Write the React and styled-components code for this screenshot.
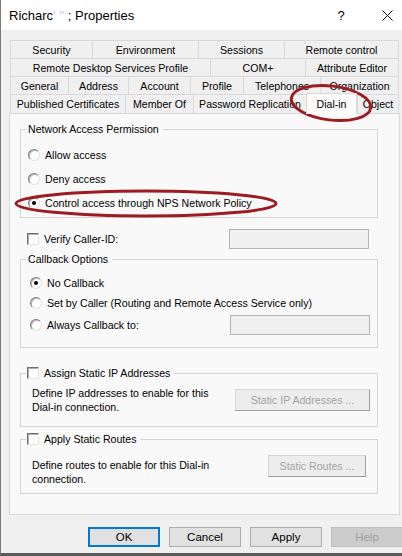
import React from 'react'
import styled, { createGlobalStyle } from 'styled-components'

const GlobalStyle = createGlobalStyle`
  html, body {
    margin: 0;
    padding: 0;
    background: #f0f0f0;
  }
  body {
    font-family: "Segoe UI", "Liberation Sans", Arial, sans-serif;
    font-size: 10.6px;
    color: #000;
  }
  * { box-sizing: border-box; }
`

const Window = styled.div`
  position: relative;
  width: 402px;
  height: 556px;
  background: #f0f0f0;
  border-left: 1px solid #7a7a7a;
  border-bottom: 3px solid #5c5c5c;
  display: flex;
  flex-direction: column;
  overflow: hidden;
`

const TitleBar = styled.div`
  height: 30px;
  flex: 0 0 30px;
  background: #fff;
  display: flex;
  align-items: center;
  padding-left: 8px;
  font-size: 13px;
`

const Title = styled.span`
  flex: 1;
`

const Faint = styled.span`
  color: #c8c8c8;
`

const HelpMark = styled.span`
  width: 30px;
  margin-right: 16px;
  text-align: center;
  font-size: 13px;
`

const CloseBox = styled.span`
  width: 30px;
  display: flex;
  justify-content: center;
  align-items: center;
`

const Body = styled.div`
  padding: 10px 0 0 8px;
  display: flex;
  flex-direction: column;
`

const Tabs = styled.div`
  margin-left: 1px;
  width: 389px;
  display: flex;
  flex-direction: column;
`

const TabRow = styled.div`
  display: flex;
  height: ${p => p.$last ? 19 : 18}px;
  align-items: flex-end;
`

const Tab = styled.div`
  flex: 0 0 ${p => p.$w}px;
  height: ${p => p.$active ? 21 : p.$h}px;
  margin-bottom: ${p => p.$active ? -1 : 0}px;
  position: relative;
  z-index: ${p => p.$active ? 2 : 0};
  display: flex;
  align-items: center;
  justify-content: center;
  white-space: nowrap;
  background: ${p => p.$active ? '#fbfbfb' : '#f0f0f0'};
  border-top: 1px solid #d9d9d9;
  border-left: 1px solid #d9d9d9;
  border-right: ${p => p.$active ? '1px solid #d9d9d9' : 'none'};
  &:last-child {
    border-right: 1px solid #d9d9d9;
  }
`

const Panel = styled.div`
  width: 391px;
  height: 402px;
  background: #f9f9f9;
  border: 1px solid #d9d9d9;
  padding: 8px 21px 0 10px;
  display: flex;
  flex-direction: column;
`

const Group = styled.fieldset`
  margin: ${p => p.$top || 0}px 0 0 0;
  padding: ${p => p.$pt}px 0 ${p => p.$pb}px 0;
  border: 1px solid #d5d5d5;
  min-width: 0;
`

const Legend = styled.legend`
  margin-left: 5px;
  padding: 0 4px 0 ${p => p.$check ? 1 : 2}px;
  line-height: 14px;
  display: flex;
  align-items: center;
  gap: 5px;
`

const OptionRow = styled.div`
  height: ${p => p.$h}px;
  display: flex;
  align-items: center;
  gap: 5px;
  padding-left: ${p => p.$indent}px;
`

const Radio = styled.span`
  width: 12px;
  height: 12px;
  flex: 0 0 12px;
  border-radius: 50%;
  background: #fff;
  border: 1px solid;
  border-color: #7c7c7c #e4e4e4 #e4e4e4 #7c7c7c;
  box-shadow: inset 1px 1px 0 #b8b8b8;
  display: flex;
  align-items: center;
  justify-content: center;
  &::after {
    content: '';
    display: ${p => p.$checked ? 'block' : 'none'};
    width: 4px;
    height: 4px;
    border-radius: 50%;
    background: #000;
  }
`

const Check = styled.span`
  width: 12px;
  height: 12px;
  flex: 0 0 12px;
  background: #fff;
  border: 1px solid;
  border-color: #6e6e6e #e4e4e4 #e4e4e4 #6e6e6e;
  box-shadow: inset 1px 1px 0 #b0b0b0;
`

const Field = styled.span`
  margin-left: auto;
  margin-right: ${p => p.$mr}px;
  width: 140px;
  height: 20px;
  background: #f0f0f0;
  border: 1px solid #b4b4b4;
`

const CallerRow = styled.div`
  margin-top: 11px;
  height: 20px;
  display: flex;
  align-items: center;
  gap: 5px;
  padding-left: 7px;
`

const InfoRow = styled.div`
  height: 32px;
  display: flex;
  align-items: flex-start;
`

const InfoText = styled.div`
  padding: ${p => p.$pt}px 0 0 11px;
  line-height: 14px;
`

const SideButton = styled.div`
  margin-left: auto;
  margin-top: ${p => p.$mt}px;
  margin-right: ${p => p.$mr}px;
  width: ${p => p.$w}px;
  height: 22px;
  display: flex;
  align-items: center;
  justify-content: center;
  color: #a3a3a3;
  background: #ededed;
  border: 1px solid;
  border-color: #d6d6d6 #9d9d9d #9d9d9d #d6d6d6;
`

const Footer = styled.div`
  margin-top: 12px;
  padding-left: 79px;
  display: flex;
  gap: 9px;
`

const Button = styled.div`
  flex: 0 0 72px;
  height: 20px;
  display: flex;
  align-items: center;
  justify-content: center;
  font-size: 11.5px;
  background: ${p => p.$disabled ? '#cccccc' : '#e1e1e1'};
  color: ${p => p.$disabled ? '#a0a0a0' : '#000'};
  border: ${p => p.$default ? '2px solid #0078d7' : `1px solid ${p.$disabled ? '#bfbfbf' : '#adadad'}`};
`

const Marks = styled.svg`
  position: absolute;
  left: 0;
  top: 0;
  pointer-events: none;
`

const tabRows = [
  [['Security', 82], ['Environment', 106], ['Sessions', 86], ['Remote control', 115]],
  [['Remote Desktop Services Profile', 200], ['COM+', 95], ['Attribute Editor', 94]],
  [['General', 58], ['Address', 60], ['Account', 62], ['Profile', 53], ['Telephones', 77], ['Organization', 79]],
  [['Published Certificates', 115], ['Member Of', 68], ['Password Replication', 113], ['Dial-in', 51], ['Object', 42]],
]

const App = () => (
  <>
    <GlobalStyle />
    <Window>
      <TitleBar>
        <Title>Richarc<Faint>' '' </Faint>; Properties</Title>
        <HelpMark>?</HelpMark>
        <CloseBox>
          <svg width="11" height="11" viewBox="0 0 11 11">
            <path d="M0.5 0.5 L10.5 10.5 M10.5 0.5 L0.5 10.5" stroke="#111" strokeWidth="1" fill="none" />
          </svg>
        </CloseBox>
      </TitleBar>

      <Body>
        <Tabs>
          {tabRows.map((row, i) => (
            <TabRow key={i} $last={i === 3}>
              {row.map(([label, w]) => (
                <Tab key={label} $w={w} $h={i === 3 ? 19 : 18} $active={label === 'Dial-in'}>{label}</Tab>
              ))}
            </TabRow>
          ))}
        </Tabs>

        <Panel>
          <Group $pt={7} $pb={2}>
            <Legend>Network Access Permission</Legend>
            <OptionRow $h={24} $indent={7}><Radio />Allow access</OptionRow>
            <OptionRow $h={24} $indent={7}><Radio />Deny access</OptionRow>
            <OptionRow $h={24} $indent={7}><Radio $checked />Control access through NPS Network Policy</OptionRow>
          </Group>

          <CallerRow>
            <Check />Verify Caller-ID:
            <Field $mr={9} />
          </CallerRow>

          <Group $top={3} $pt={7} $pb={10}>
            <Legend>Callback Options</Legend>
            <OptionRow $h={20} $indent={9}><Radio $checked />No Callback</OptionRow>
            <OptionRow $h={20} $indent={9}><Radio />Set by Caller (Routing and Remote Access Service only)</OptionRow>
            <OptionRow $h={24} $indent={9}><Radio />Always Callback to:<Field $mr={7} /></OptionRow>
          </Group>

          <Group $top={18} $pt={4} $pb={10}>
            <Legend $check><Check />Assign Static IP Addresses</Legend>
            <InfoRow>
              <InfoText $pt={2}>Define IP addresses to enable for this<br />Dial-in connection.</InfoText>
              <SideButton $w={135} $mt={5} $mr={7}>Static IP Addresses ...</SideButton>
            </InfoRow>
          </Group>

          <Group $top={5} $pt={8} $pb={7}>
            <Legend $check><Check />Apply Static Routes</Legend>
            <InfoRow>
              <InfoText $pt={4}>Define routes to enable for this Dial-in<br />connection.</InfoText>
              <SideButton $w={98} $mt={1} $mr={11}>Static Routes ...</SideButton>
            </InfoRow>
          </Group>
        </Panel>

        <Footer>
          <Button $default>OK</Button>
          <Button>Cancel</Button>
          <Button>Apply</Button>
          <Button $disabled>Help</Button>
        </Footer>
      </Body>

      <Marks width="402" height="556">
        <ellipse cx="330" cy="103" rx="40" ry="17" transform="rotate(7 330 103)" fill="none" stroke="#9b1c22" strokeWidth="3" />
        <ellipse cx="145" cy="203.5" rx="130" ry="12.5" fill="none" stroke="#9b1c22" strokeWidth="3" />
      </Marks>
    </Window>
  </>
)

export default App
